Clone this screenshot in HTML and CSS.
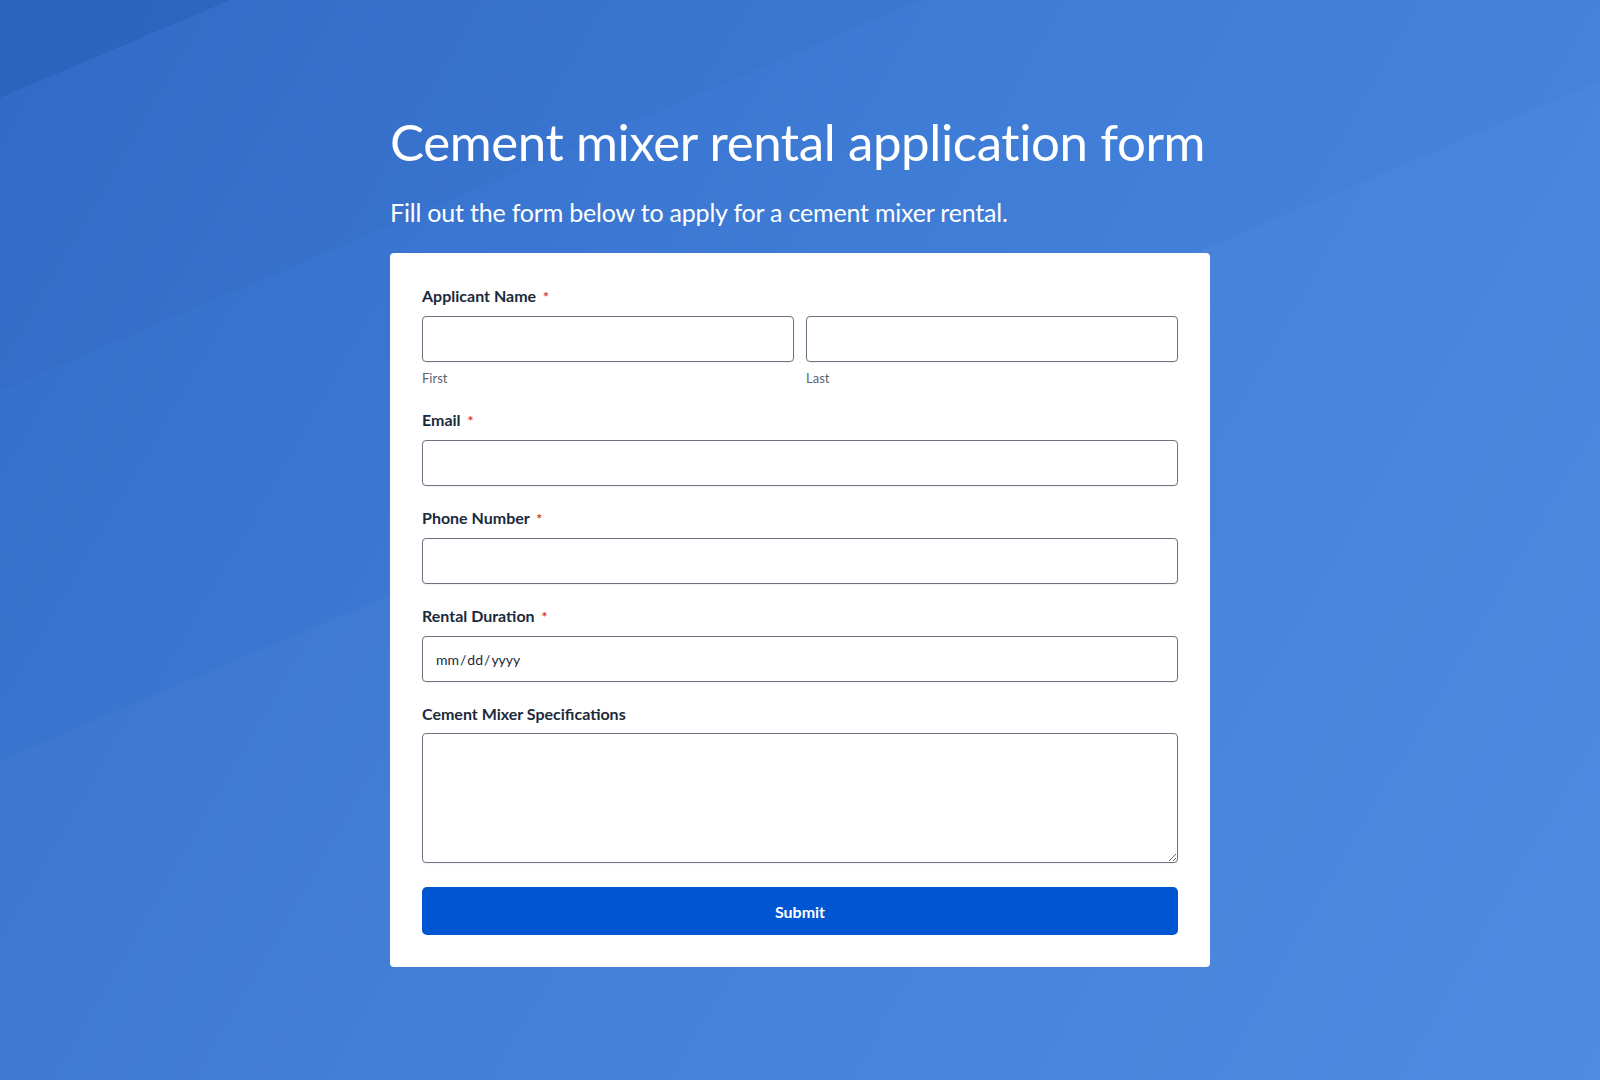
FILE: index.html
```html
<!DOCTYPE html>
<html lang='en'>

<head>
    <meta charset='UTF-8'>
    <meta name='viewport' content='width=device-width, initial-scale=1.0'>
    <title>Cement mixer rental application form</title>
    <link rel="stylesheet" href="styles.css">
</head>

<body>
    <div class='page'>
        <h1>Cement mixer rental application form</h1>
        <p class='intro'>Fill out the form below to apply for a cement mixer rental.</p>

        <form class='card'>
            <div class='form-group'>
                <label>Applicant Name <span class='req'>*</span></label>
                <div class='name-row'>
                    <div class='name-part'>
                        <input type='text' id='first_name'>
                        <span class='sub'>First</span>
                    </div>
                    <div class='name-part'>
                        <input type='text' id='last_name'>
                        <span class='sub'>Last</span>
                    </div>
                </div>
            </div>

            <div class='form-group'>
                <label for='email'>Email <span class='req'>*</span></label>
                <input type='email' id='email'>
            </div>

            <div class='form-group'>
                <label for='phone'>Phone Number <span class='req'>*</span></label>
                <input type='tel' id='phone'>
            </div>

            <div class='form-group'>
                <label for='duration'>Rental Duration <span class='req'>*</span></label>
                <input type='date' id='duration' class='date'>
            </div>

            <div class='form-group'>
                <label for='specs'>Cement Mixer Specifications</label>
                <textarea id='specs'></textarea>
            </div>

            <button type='button'>Submit</button>
        </form>
    </div>
</body>

</html>
```

FILE: styles.css
```css
body {
    font-family: Lato, "Noto Sans", sans-serif;
    margin: 0;
    padding: 0;
    min-height: 100vh;
    background-color: #3f7bd6;
    background-image:
        linear-gradient(157deg, rgba(30, 80, 170, 0.3) 0, rgba(30, 80, 170, 0.3) 90px, transparent 90px),
        linear-gradient(157deg, rgba(30, 80, 170, 0.08) 0, rgba(30, 80, 170, 0.08) 360px, transparent 360px),
        linear-gradient(157deg, rgba(255, 255, 255, 0) 0, rgba(255, 255, 255, 0) 700px, rgba(255, 255, 255, 0.025) 700px),
        linear-gradient(120deg, #336dc9 0%, #3f7cd6 45%, #4b88e0 100%);
}

.page {
    width: 820px;
    margin: 0 auto;
    padding-top: 110px;
    padding-bottom: 60px;
}

h1 {
    margin: 0;
    color: #fff;
    font-weight: 400;
    font-size: 51px;
    line-height: 64px;
    letter-spacing: -0.4px;
}

.intro {
    margin: 24px 0 27px;
    color: #fff;
    font-size: 25px;
    line-height: 28px;
    letter-spacing: -0.2px;
}

.card {
    background-color: #fff;
    border-radius: 4px;
    padding: 32px;
}

.form-group {
    display: flex;
    flex-direction: column;
    margin-bottom: 21px;
}

.form-group label {
    font-size: 16px;
    line-height: 22px;
    font-weight: 700;
    color: #1b2a3d;
    margin-bottom: 8px;
}

.req {
    color: #d5392b;
    font-size: 14px;
    vertical-align: 0;
    margin-left: 3px;
}

.name-row {
    display: flex;
    gap: 12px;
}

.name-part {
    flex: 1;
    display: flex;
    flex-direction: column;
}

.sub {
    margin-top: 6px;
    font-size: 13px;
    line-height: 20px;
    color: #5c6470;
}

input,
textarea {
    box-sizing: border-box;
    width: 100%;
    height: 46px;
    margin: 0;
    padding: 0 12px;
    border: 1px solid #6b7280;
    border-radius: 4px;
    background-color: #fff;
    box-shadow: 0 1px 2px rgba(0, 0, 0, 0.06);
    font-family: Lato, "Noto Sans", sans-serif;
    font-size: 14px;
    color: #1b2a3d;
}

.date::-webkit-calendar-picker-indicator {
    display: none;
}

textarea {
    height: 130px;
    padding: 10px 12px;
}

.card button {
    display: block;
    width: 100%;
    height: 48px;
    margin-top: 24px;
    background-color: #0056d2;
    color: #fff;
    border: none;
    border-radius: 5px;
    font-family: Lato, "Noto Sans", sans-serif;
    font-size: 16px;
    font-weight: 700;
    cursor: pointer;
}

.form-group:last-of-type {
    margin-bottom: 0;
}
```
